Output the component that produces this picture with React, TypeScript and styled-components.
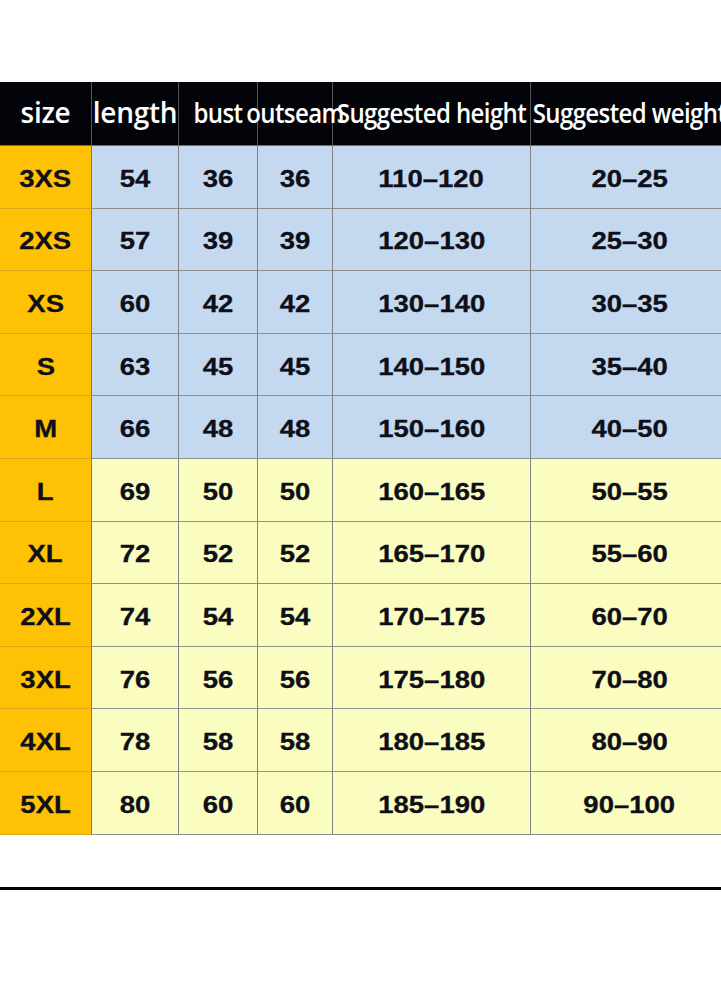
import React from "react";
import styled, { createGlobalStyle } from "styled-components";

const GlobalStyle = createGlobalStyle`
  html, body { margin: 0; padding: 0; background: #ffffff; overflow: hidden; }
  body { width: 721px; height: 983px; }
`;

const COLS = "92px 87px 79px 75px 198px 198px";

const Page = styled.div`
  width: 721px;
  height: 983px;
  overflow: hidden;
  padding-top: 82px;
  box-sizing: border-box;
  background: #ffffff;
`;

const Table = styled.div`
  width: 729px;
  display: flex;
  flex-direction: column;
`;

const HeaderRow = styled.div`
  display: grid;
  grid-template-columns: ${COLS};
  height: 64px;
  background: #03040a;
`;

const HeaderCell = styled.div<{ $big?: boolean }>`
  box-sizing: border-box;
  display: flex;
  align-items: center;
  justify-content: center;
  padding-bottom: 3px;
  border-right: 1px solid #55565c;
  border-bottom: 1px solid #6b6b6b;
  white-space: nowrap;
  color: #ffffff;
  font-family: "Open Sans", "Noto Sans", sans-serif;
  font-weight: 600;
  font-size: ${(p) => (p.$big ? "28px" : "24px")};
  letter-spacing: ${(p) => (p.$big ? "-0.3px" : "-0.6px")};
`;

const HeaderText = styled.span<{ $big?: boolean }>`
  display: inline-block;
  transform: ${(p) => (p.$big ? "none" : "scaleY(1.15)")};
`;

const BodyRow = styled.div`
  display: grid;
  grid-template-columns: ${COLS};
  height: 62.6px;
`;

const Cell = styled.div<{ $tone: "size" | "blue" | "yellow" }>`
  box-sizing: border-box;
  display: flex;
  align-items: center;
  justify-content: center;
  padding-top: 5px;
  background: ${(p) =>
    p.$tone === "size" ? "#ffc103" : p.$tone === "blue" ? "#c4d9f0" : "#fafdbf"};
  border-right: 1px solid
    ${(p) => (p.$tone === "size" ? "#8a7a3a" : "#7f8286")};
  border-bottom: 1px solid
    ${(p) => (p.$tone === "size" ? "#d9a720" : "#8d8f8a")};
  color: #0e0f18;
  font-family: "Liberation Sans", Arial, sans-serif;
  font-weight: 700;
  font-size: 23.5px;
  white-space: nowrap;
`;

const Value = styled.span`
  display: inline-block;
  transform: scaleX(1.17);
  -webkit-text-stroke: 0.3px #0e0f18;
`;

const Spacer = styled.div`
  height: 52px;
`;

const Rule = styled.div`
  height: 3px;
  width: 721px;
  background: #000000;
`;

const headers: { label: string; big?: boolean }[] = [
  { label: "size", big: true },
  { label: "length", big: true },
  { label: "bust" },
  { label: "outseam" },
  { label: "Suggested height" },
  { label: "Suggested weight" },
];

const rows: string[][] = [
  ["3XS", "54", "36", "36", "110–120", "20–25"],
  ["2XS", "57", "39", "39", "120–130", "25–30"],
  ["XS", "60", "42", "42", "130–140", "30–35"],
  ["S", "63", "45", "45", "140–150", "35–40"],
  ["M", "66", "48", "48", "150–160", "40–50"],
  ["L", "69", "50", "50", "160–165", "50–55"],
  ["XL", "72", "52", "52", "165–170", "55–60"],
  ["2XL", "74", "54", "54", "170–175", "60–70"],
  ["3XL", "76", "56", "56", "175–180", "70–80"],
  ["4XL", "78", "58", "58", "180–185", "80–90"],
  ["5XL", "80", "60", "60", "185–190", "90–100"],
];

export default function App() {
  return (
    <>
      <GlobalStyle />
      <Page>
        <Table>
          <HeaderRow>
            {headers.map((h) => (
              <HeaderCell key={h.label} $big={h.big}>
                <HeaderText $big={h.big}>{h.label}</HeaderText>
              </HeaderCell>
            ))}
          </HeaderRow>
          {rows.map((r, i) => (
            <BodyRow key={r[0]}>
              {r.map((v, j) => (
                <Cell
                  key={j}
                  $tone={j === 0 ? "size" : i < 5 ? "blue" : "yellow"}
                >
                  <Value>{v}</Value>
                </Cell>
              ))}
            </BodyRow>
          ))}
        </Table>
        <Spacer />
        <Rule />
      </Page>
    </>
  );
}
